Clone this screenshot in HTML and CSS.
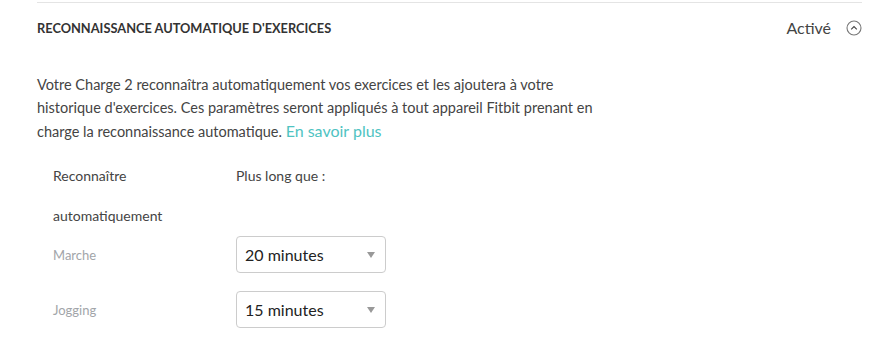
FILE: index.html
```html
<!DOCTYPE html>
<html lang="fr">
<head>
    <meta charset="UTF-8">
    <title>Reconnaissance automatique d'exercices</title>
    <link rel="stylesheet" href="styles.css">
</head>
<body>
    <section class="setting">
        <header class="setting-head">
            <h4 class="setting-title">Reconnaissance automatique d'exercices</h4>
            <div class="setting-state">
                <span>Activé</span>
                <svg class="toggle" width="16" height="16" viewBox="0 0 16 16">
                    <circle cx="8" cy="8" r="7" fill="none" stroke="#777" stroke-width="1.1"/>
                    <path d="M5.2 9.4 L8 6.6 L10.8 9.4" fill="none" stroke="#444" stroke-width="1.1"/>
                </svg>
            </div>
        </header>
        <p class="intro">
            Votre Charge 2 reconnaîtra automatiquement vos exercices et les ajoutera à votre<br>
            historique d'exercices. Ces paramètres seront appliqués à tout appareil Fitbit prenant en<br>
            charge la reconnaissance automatique. <a href="#">En savoir plus</a>
        </p>
        <div class="rules">
            <div class="rule-head">Reconnaître<br><br>automatiquement</div>
            <div class="rule-head">Plus long que :</div>

            <label class="rule-name">Marche</label>
            <div class="select">20 minutes<span class="caret"></span></div>

            <label class="rule-name">Jogging</label>
            <div class="select">15 minutes<span class="caret"></span></div>
        </div>
    </section>
</body>
</html>
```

FILE: styles.css
```css
body {
    margin: 0;
    padding: 2px 32px 0 37px;
    font-family: "Lato", "Open Sans", sans-serif;
    color: #444;
    background: #fff;
}

.setting {
    border-top: 1px solid #e4e4e4;
}

.setting-head {
    display: flex;
    justify-content: space-between;
    align-items: center;
    height: 50px;
}
.setting-title {
    margin: 0;
    font-size: 12.8px;
    font-weight: 700;
    text-transform: uppercase;
    color: #333;
}
.setting-state {
    display: flex;
    align-items: center;
    gap: 15px;
    margin-top: -2px;
    font-size: 16px;
    color: #444;
}
.toggle {
    display: block;
    margin-top: 1px;
}

.intro {
    margin: 20px 0 0;
    font-size: 14.5px;
    line-height: 23px;
}
.intro a {
    color: #4fc3c2;
    font-size: 16px;
    text-decoration: none;
}

.rules {
    display: grid;
    grid-template-columns: 183px 150px;
    align-items: center;
    row-gap: 18px;
    margin-top: 23px;
    padding-left: 16px;
    font-size: 14px;
}
.rule-head {
    align-self: start;
    margin-bottom: -8px;
    line-height: 20px;
    color: #444;
}
.rule-head br + br {
    line-height: 22px;
}
.rule-name {
    font-size: 13px;
    color: #a2a5a9;
}
.select {
    display: flex;
    align-items: center;
    justify-content: space-between;
    height: 35px;
    padding: 0 10px 0 8px;
    border: 1px solid #ccc;
    border-radius: 4px;
    font-size: 16px;
    color: #222;
}
.caret {
    width: 0;
    height: 0;
    border-left: 4px solid transparent;
    border-right: 4px solid transparent;
    border-top: 6px solid #999;
}
```
